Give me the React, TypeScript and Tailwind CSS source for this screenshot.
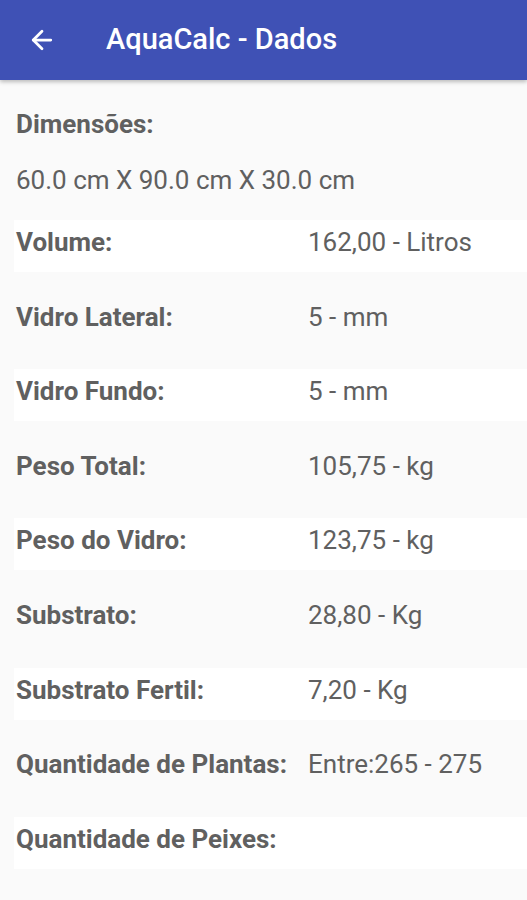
import { ArrowLeft } from "lucide-react";

const ROWS: { label: string; value: string }[] = [
  { label: "Volume:", value: "162,00 - Litros" },
  { label: "Vidro Lateral:", value: "5 - mm" },
  { label: "Vidro Fundo:", value: "5 - mm" },
  { label: "Peso Total:", value: "105,75 - kg" },
  { label: "Peso do Vidro:", value: "123,75 - kg" },
  { label: "Substrato:", value: "28,80 - Kg" },
  { label: "Substrato Fertil:", value: "7,20 - Kg" },
  { label: "Quantidade de Plantas:", value: "Entre:265 - 275" },
  { label: "Quantidade de Peixes:", value: "" },
];

export default function App() {
  return (
    <div className="w-[527px] h-[900px] overflow-hidden bg-[#fafafa] font-['Roboto',sans-serif]">
      {/* Toolbar */}
      <div className="h-[80px] bg-[#3f51b5] flex items-center shadow-[0_2px_4px_rgba(0,0,0,0.25)] relative z-10">
        <ArrowLeft className="ml-[27px] w-[30px] h-[30px] text-white" strokeWidth={2.2} />
        <h1 className="ml-[49px] text-[29px] font-medium text-white">AquaCalc - Dados</h1>
      </div>

      {/* Content */}
      <div className="pl-[14px] pt-[29px]">
        <p className="pl-[2px] text-[26px] leading-[30px] font-bold text-[#606060]">Dimensões:</p>
        <p className="pl-[2px] mt-[26px] text-[26px] leading-[30px] text-[#606060]">
          60.0 cm X 90.0 cm X 30.0 cm
        </p>

        <div className="mt-[25px]">
          {ROWS.map((row, i) => (
            <div
              key={row.label}
              className={
                "h-[52px] mb-[22.6px] flex items-start pt-[7px] " +
                (i % 2 === 0 ? "bg-white" : "bg-transparent")
              }
            >
              <span className="pl-[2px] w-[294px] shrink-0 whitespace-nowrap text-[26px] leading-[30px] font-bold text-[#606060]">
                {row.label}
              </span>
              <span className="whitespace-nowrap text-[26px] leading-[30px] text-[#606060]">{row.value}</span>
            </div>
          ))}
        </div>
      </div>
    </div>
  );
}
